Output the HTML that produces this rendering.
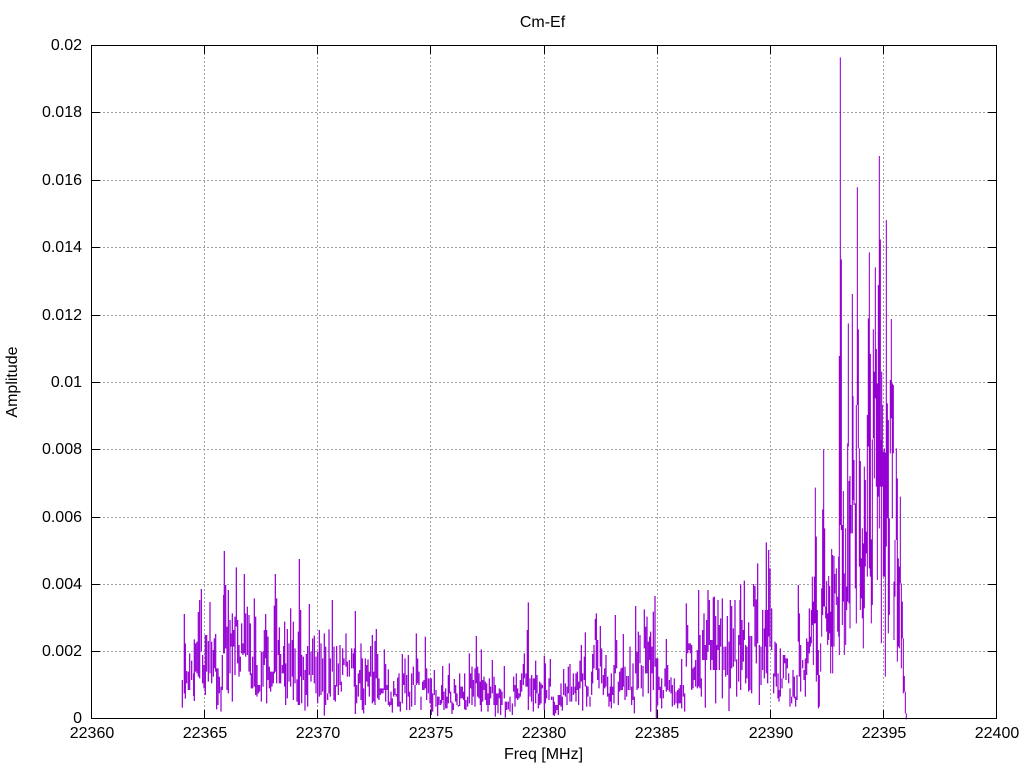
<!DOCTYPE html>
<html>
<head>
<meta charset="utf-8">
<title>Cm-Ef</title>
<style>
html,body{margin:0;padding:0;background:#fff;width:1024px;height:768px;overflow:hidden}
svg{display:block}
text{font-family:"Liberation Sans",sans-serif;font-size:16px;fill:#000}
</style>
</head>
<body>
<svg width="1024" height="768" viewBox="0 0 1024 768" xmlns="http://www.w3.org/2000/svg">
<rect width="1024" height="768" fill="#fff"/>
<g stroke="#a0a0a0" stroke-width="1" stroke-dasharray="2 2" fill="none" shape-rendering="crispEdges">
<path d="M204.5 45V719M317.5 45V719M430.5 45V719M544.5 45V719M657.5 45V719M770.5 45V719M883.5 45V719"/>
<path d="M91 112.5H997M91 180.5H997M91 247.5H997M91 315.5H997M91 382.5H997M91 449.5H997M91 517.5H997M91 584.5H997M91 651.5H997"/>
</g>
<g fill="none" stroke="#9400d3" stroke-width="3.7">
<path transform="matrix(.33333 0 0 .33333 175 540)" d="M22 420V503M28 222V460M31 310V476M35 393V430M40 395V450M44 340V450M50 362V420M56 400V468M58 298V483M62 310V395M66 305V400M70 216V410M74 180V415M79 147V335M83 345V430M87 375V445M91 285V465M95 285V395M100 303V425M105 186V400M110 305V430M115 330V410M118 295V385M122 282V395M125 385V508M129 385V495M133 410V460M138 440V515M142 345V450M146 165V340M148 33V340M152 135V325M156 260V450M160 150V460M165 240V400M168 280V320M172 220V485M176 270V320M180 230V405M184 82V260M188 240V370M192 315V410M196 350V395M200 250V340M204 310V345M208 102V340M212 220V350M217 200V345M222 225V395M226 250V405M229 400V445M233 350V445M238 175V440M242 230V465M246 375V470M250 435V460M254 435V455M259 335V485M264 335V440M268 270V375M272 222V355M275 270V490M279 290V420M283 380V445M287 395V455M291 395V440M295 395V430M298 197V400M301 102V395M305 175V430M310 300V345M313 262V430M317 342V430M322 375V400M326 318V400M329 245V440M332 370V495M337 267V475M342 310V425M347 205V440M352 300V410M355 245V480M360 325V430M366 418V485M370 275V495M373 57V495M377 210V410M380 345V490M385 350V420M390 390V512M394 342V465M398 318V500M403 192V405M408 335V425M413 295V405M418 287V430M423 350V460M428 335V490M433 270V470M438 310V465M443 355V455M448 280V527M452 320V495M458 460V480M462 268V460M466 355V470M472 180V395M477 320V480M481 435V485M485 318V440M490 370V465M495 315V435M499 425V455M503 325V405M507 355V375M513 280V380M517 365V410M523 360V410M530 325V385M535 340V385M538 325V440"/>
<path transform="matrix(.33333 0 0 .33333 355 590)" d="M1 63V372M5 285V340M10 250V320M14 240V280M18 160V330M22 205V360M26 295V370M31 205V345M35 225V275M39 208V290M43 245V320M47 168V260M52 135V340M56 245V335M60 153V345M64 117V265M68 192V325M72 265V330M76 295V315M80 295V310M84 295V310M88 178V300M92 222V335M96 285V300M100 238V345M104 335V350M108 305V345M112 325V368M116 273V320M120 295V315M124 312V320M128 263V350M132 250V350M136 335V365M142 192V340M146 250V285M150 205V310M155 255V360M160 195V320M164 305V360M170 250V350M175 230V285M180 285V345M184 130V285M188 205V280M192 245V285M198 320V360M203 275V300M207 270V300M211 140V295M215 235V330M220 265V310M225 265V340M229 265V375M233 310V365M238 240V315M243 300V350M248 320V378M252 320V345M257 330V345M260 285V340M263 228V330M267 305V360M272 295V355M276 320V355M280 255V340M283 220V310M287 305V338M291 335V372M295 340V360M298 267V310M302 285V335M306 310V345M310 345V350M314 250V348M318 290V325M322 290V325M326 305V330M329 250V358M333 330V360M338 320V350M343 190V340M347 250V295M351 230V345M355 270V320M360 235V350M364 138V280M368 230V320M372 250V325M376 275V345M379 178V365M383 270V335M387 260V300M391 275V330M395 280V345M399 310V365M403 265V345M407 290V325M412 210V310M417 260V345M421 285V380M425 310V345M429 310V370M433 295V325M437 298V375M441 305V345M448 228V325M451 335V383M455 335V360M460 335V358M465 320V365M472 340V375M476 260V305M480 285V350M484 250V325M488 295V330M492 310V325M496 270V320M500 250V305M505 222V285M508 190V265M513 250V290M517 120V290M520 37V360M525 265V320M530 255V335M535 265V365M539 265V300"/>
<path transform="matrix(.33333 0 0 .33333 535 590)" d="M2 212V340M6 255V310M10 310V355M14 275V345M18 280V340M22 285V295M28 197V360M31 220V340M35 300V325M42 265V330M46 207V290M50 320V330M55 320V375M58 335V378M62 345V370M66 345V360M70 315V375M74 315V345M78 280V350M82 320V362M86 237V315M91 280V320M96 290V345M100 230V310M105 222V335M110 290V335M115 250V315M120 290V310M123 250V335M127 245V300M131 275V345M135 212V295M139 165V275M143 250V362M148 200V270M151 127V290M155 287V350M159 290V320M165 320V350M170 245V315M173 192V280M177 165V235M181 87V150M184 70V240M188 150V270M192 235V295M196 108V230M200 175V280M205 255V315M209 235V295M213 195V290M218 260V320M222 310V350M226 290V335M229 250V355M233 290V315M237 225V340M241 75V250M245 150V235M250 275V345M254 245V305M258 235V300M262 233V300M265 132V290M270 230V330M275 258V320M280 258V300M285 170V300M290 290V345M294 220V330M298 320V370M302 48V250M306 185V300M310 125V295M315 135V220M319 225V295M324 228V320M328 58V175M332 110V250M336 80V250M340 155V310M344 140V210M347 125V365M351 170V250M355 65V300M360 18V230M364 205V385M368 205V345M372 260V300M376 290V325M380 265V355M385 300V325M390 235V290M394 147V305M398 225V300M403 270V305M408 262V310M412 285V350M418 265V345M423 305V340M428 300V355M432 295V340M436 285V340M440 207V355M445 285V320M449 310V365M454 40V230M458 105V190M462 160V180M466 160V190M470 165V300M474 235V295M478 230V270M482 210V290M487 180V295M491 0V290M495 135V295M499 265V320M503 120V210M507 70V210M511 165V353M515 90V210M519 0V185M523 30V165M527 150V240M531 150V210M535 22V240"/>
<path transform="matrix(.33333 0 0 .33333 680 530)" d="M103 200V420M107 258V520M110 345V420M114 210V360M118 285V420M122 265V350M127 205V505M132 350V420M137 350V440M142 258V435M147 335V543M151 210V475M155 228V415M160 295V410M165 210V395M170 388V500M176 315V455M180 210V345M182 163V480M186 270V420M190 300V395M193 152V330M197 345V460M201 350V445M206 277V485M210 318V480M215 318V490M221 162V230M225 168V350M229 208V400M233 100V340M238 345V525M243 350V465M248 240V420M253 295V445M256 240V350M259 37V430M263 240V460M266 60V320M270 115V350M275 235V360M281 430V490M285 335V440M289 340V470M294 430V505M297 480V515M301 355V500M306 445V475M310 375V445M314 375V400M318 385V450M322 385V415M326 430V460M330 475V530M335 500V520M339 420V500M343 440V505M347 500V530M351 435V510M355 165V335M358 250V440M362 345V485M368 390V415M372 420V450M376 385V500M380 325V435M384 335V400M388 235V370"/>
</g>
<path fill="none" stroke="#9400d3" stroke-width="3.2" transform="matrix(.33333 0 0 .33333 810 50)" d="M1 1760V1790M4 1680V1780M7 1580V1725M10 1655V1845M13 1580V1720M16 1313V1720M19 1460V1895M22 1680V1875M25 1800V1975M28 1875V1970M32 1780V1865M35 1615V1760M38 1378V1695M41 1198V1670M44 1435V1670M47 1670V1705M50 1593V1745M53 1690V1785M56 1578V1770M59 1608V1750M62 1685V1870M65 1497V1790M68 1515V1870M72 1518V1790M75 1572V1630M79 1555V1665M83 1640V1745M86 1520V1760M88 918V1815M91 22V1425M94 628V1440M97 1425V1725M100 1323V1655M103 1570V1815M107 1435V1785M110 1610V1680M113 1180V1655M115 820V1190M117 1293V1660M120 1278V1735M123 1365V1450M127 732V1450M129 1038V1350M132 1230V1365M136 1360V1615M139 1065V1720M142 412V1065M145 838V1195M148 1195V1550M151 1233V1680M154 1525V1645M157 1435V1705M160 1480V1795M163 1250V1675M166 1290V1550M169 1445V1510M172 1095V1580M175 805V1190M178 607V1555M181 912V1580M184 1468V1720M187 1168V1665M190 838V1165M193 965V1285M196 652V1045M199 897V1310M202 1000V1590M205 705V1340M208 318V1435M211 568V1310M214 1170V1780M215 965V1300M217 1065V1310M220 1205V1580M223 1195V1580M226 1208V1880M229 510V1490M232 1060V1405M235 1110V1750M238 1405V1695M241 990V1210M244 807V1105M247 1000V1405M250 1005V1210M252 1595V1770M255 1470V1640M259 1195V1470M262 1285V1835M265 1525V1790M268 1550V1795M271 1340V1600M274 1600V1855M277 1655V1765M280 1765V1930M283 1878V1925M286 1925V1990M289 1990V2008"/>
<g fill="none" stroke="#000" stroke-width="1" shape-rendering="crispEdges">
<path d="M91.5 45.5H996.5V718.5H91.5Z"/>
<path d="M91 112.5H100M91 180.5H100M91 247.5H100M91 315.5H100M91 382.5H100M91 449.5H100M91 517.5H100M91 584.5H100M91 651.5H100"/>
<path d="M997 112.5H988M997 180.5H988M997 247.5H988M997 315.5H988M997 382.5H988M997 449.5H988M997 517.5H988M997 584.5H988M997 651.5H988"/>
<path d="M204.5 719V710M317.5 719V710M430.5 719V710M544.5 719V710M657.5 719V710M770.5 719V710M883.5 719V710"/>
<path d="M204.5 45V54M317.5 45V54M430.5 45V54M544.5 45V54M657.5 45V54M770.5 45V54M883.5 45V54"/>
</g>
<g text-anchor="end">
<text x="82" y="50">0.02</text>
<text x="82" y="117">0.018</text>
<text x="82" y="185">0.016</text>
<text x="82" y="252">0.014</text>
<text x="82" y="320">0.012</text>
<text x="82" y="387">0.01</text>
<text x="82" y="454">0.008</text>
<text x="82" y="522">0.006</text>
<text x="82" y="589">0.004</text>
<text x="82" y="656">0.002</text>
<text x="82" y="723">0</text>
</g>
<g text-anchor="middle">
<text x="92" y="738">22360</text>
<text x="205" y="738">22365</text>
<text x="318" y="738">22370</text>
<text x="431" y="738">22375</text>
<text x="544" y="738">22380</text>
<text x="657" y="738">22385</text>
<text x="771" y="738">22390</text>
<text x="884" y="738">22395</text>
<text x="997" y="738">22400</text>
<text x="543.5" y="759">Freq [MHz]</text>
<text x="542.5" y="27">Cm-Ef</text>
<text transform="translate(17 382) rotate(-90)">Amplitude</text>
</g>
</svg>
</body>
</html>
